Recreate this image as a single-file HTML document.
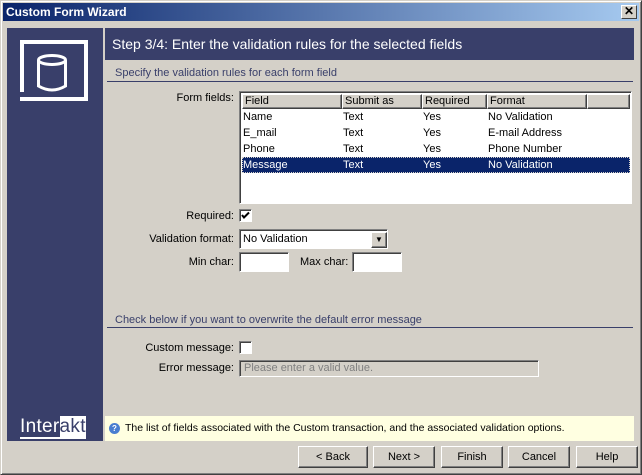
<!DOCTYPE html>
<html><head><style>
*{margin:0;padding:0;box-sizing:border-box}
body{width:642px;height:475px;background:#d4d0c8;font-family:"Liberation Sans",sans-serif;font-size:11px;color:#000;position:relative;overflow:hidden}
.a{position:absolute}
#win{left:0;top:0;width:642px;height:475px;border:1px solid;border-color:#d4d0c8 #404040 #404040 #d4d0c8;box-shadow:inset 1px 1px #fff,inset -1px -1px #808080}
#title{left:3px;top:3px;width:636px;height:18px;background:linear-gradient(to right,#0a246a,#a6caf0);color:#fff;font-weight:bold;font-size:12px;line-height:18px;padding-left:3px}
#close{left:621px;top:5px;width:16px;height:14px;background:#d4d0c8;border:1px solid;border-color:#fff #404040 #404040 #fff;text-align:center;line-height:11px;font-size:12px;font-weight:bold;color:#000}
#left{left:7px;top:28px;width:96px;height:413px;background:#393f6a}
#hdr{left:105px;top:28px;width:529px;height:32px;background:#393f6a;color:#fff;font-size:14px;line-height:32px;padding-left:7px}
.sec{color:#393f6a;font-size:11px}
.line{height:1px;background:#393f6a}
.lbl{text-align:right;width:130px}
.box{background:#fff;border:1px solid;border-color:#808080 #fff #fff #808080;box-shadow:inset 1px 1px #404040}
.btn{height:22px;border:1px solid;border-color:#fff #404040 #404040 #fff;box-shadow:inset -1px -1px #808080;text-align:center;line-height:20px;background:#d4d0c8}
.row{position:absolute;left:2px;height:16px;line-height:16px;width:388px}
.row span{position:absolute}
</style></head><body>
<div id="win" class="a"></div>
<div id="title" class="a">Custom Form Wizard</div>
<div id="close" class="a">✕</div>
<div id="left" class="a">
<svg width="96" height="100" style="position:absolute;left:0;top:0">
<path d="M15 64 V14 H79 V71 H13" fill="none" stroke="#fff" stroke-width="4"/>
<ellipse cx="45" cy="32" rx="13.5" ry="4.5" fill="none" stroke="#fff" stroke-width="3"/>
<path d="M31.5 32 V58 Q45 66 58.5 58 V32" fill="none" stroke="#fff" stroke-width="3"/>
</svg>
<div class="a" style="left:13px;top:388px;color:#fff;font-size:19px;border-bottom:2px solid #fff;line-height:21px;letter-spacing:0.3px">Inter<span style="background:#fff;color:#393f6a">akt</span></div>
</div>
<div id="hdr" class="a">Step 3/4: Enter the validation rules for the selected fields</div>
<div class="a sec" style="left:115px;top:67px">Specify the validation rules for each form field</div>
<div class="a line" style="left:107px;top:81px;width:526px"></div>
<div class="a lbl" style="left:104px;top:92px">Form fields:</div>
<div class="a box" style="left:239px;top:91px;width:393px;height:113px">
<div class="a" style="left:2px;top:2px;width:388px;height:15px;background:#d4d0c8">
<div class="a btn" style="left:0;top:0;width:100px;height:15px;line-height:13px;text-align:left;padding-left:2px">Field</div>
<div class="a btn" style="left:100px;top:0;width:80px;height:15px;line-height:13px;text-align:left;padding-left:2px">Submit as</div>
<div class="a btn" style="left:180px;top:0;width:65px;height:15px;line-height:13px;text-align:left;padding-left:2px">Required</div>
<div class="a btn" style="left:245px;top:0;width:100px;height:15px;line-height:13px;text-align:left;padding-left:2px">Format</div>
<div class="a btn" style="left:345px;top:0;width:43px;height:15px"></div>
</div>
<div class="row" style="top:17px"><span style="left:1px">Name</span><span style="left:101px">Text</span><span style="left:181px">Yes</span><span style="left:246px">No Validation</span></div>
<div class="row" style="top:33px"><span style="left:1px">E_mail</span><span style="left:101px">Text</span><span style="left:181px">Yes</span><span style="left:246px">E-mail Address</span></div>
<div class="row" style="top:49px"><span style="left:1px">Phone</span><span style="left:101px">Text</span><span style="left:181px">Yes</span><span style="left:246px">Phone Number</span></div>
<div class="row" style="top:65px;background:#0a246a;color:#fff;outline:1px dotted #d4d0c8;outline-offset:-1px"><span style="left:1px">Message</span><span style="left:101px">Text</span><span style="left:181px">Yes</span><span style="left:246px">No Validation</span></div>
</div>
<div class="a lbl" style="left:104px;top:210px">Required:</div>
<div class="a box" style="left:239px;top:209px;width:13px;height:13px">
<svg width="11" height="11" style="position:absolute;left:0;top:0"><path d="M2 5 L4 7.5 L9 2.5" fill="none" stroke="#000" stroke-width="2"/></svg></div>
<div class="a lbl" style="left:104px;top:233px">Validation format:</div>
<div class="a box" style="left:239px;top:229px;width:149px;height:20px;padding:3px 0 0 3px">No Validation
<div class="a btn" style="left:131px;top:2px;width:16px;height:16px;font-size:8px;line-height:14px">▼</div></div>
<div class="a lbl" style="left:104px;top:256px">Min char:</div>
<div class="a box" style="left:239px;top:252px;width:50px;height:20px"></div>
<div class="a" style="left:300px;top:256px">Max char:</div>
<div class="a box" style="left:352px;top:252px;width:50px;height:20px"></div>
<div class="a sec" style="left:115px;top:314px">Check below if you want to overwrite the default error message</div>
<div class="a line" style="left:107px;top:327px;width:526px"></div>
<div class="a lbl" style="left:104px;top:342px">Custom message:</div>
<div class="a box" style="left:239px;top:341px;width:13px;height:13px"></div>
<div class="a lbl" style="left:104px;top:362px">Error message:</div>
<div class="a box" style="left:239px;top:360px;width:300px;height:17px;background:#d4d0c8;color:#808080;padding:1px 0 0 4px">Please enter a valid value.</div>
<div class="a" style="left:105px;top:416px;width:529px;height:25px;background:#ffffe1;line-height:25px;padding-left:20px;font-size:10.5px">The list of fields associated with the Custom transaction, and the associated validation options.
<div class="a" style="left:4px;top:7px;width:11px;height:11px;border-radius:50%;background:#4a7ed0;color:#fff;font-size:8px;line-height:11px;text-align:center;font-weight:bold">?</div></div>
<div class="a btn" style="left:298px;top:446px;width:70px">&lt; Back</div>
<div class="a btn" style="left:373px;top:446px;width:62px">Next &gt;</div>
<div class="a btn" style="left:441px;top:446px;width:62px">Finish</div>
<div class="a btn" style="left:508px;top:446px;width:62px">Cancel</div>
<div class="a btn" style="left:576px;top:446px;width:62px">Help</div>
</body></html>
